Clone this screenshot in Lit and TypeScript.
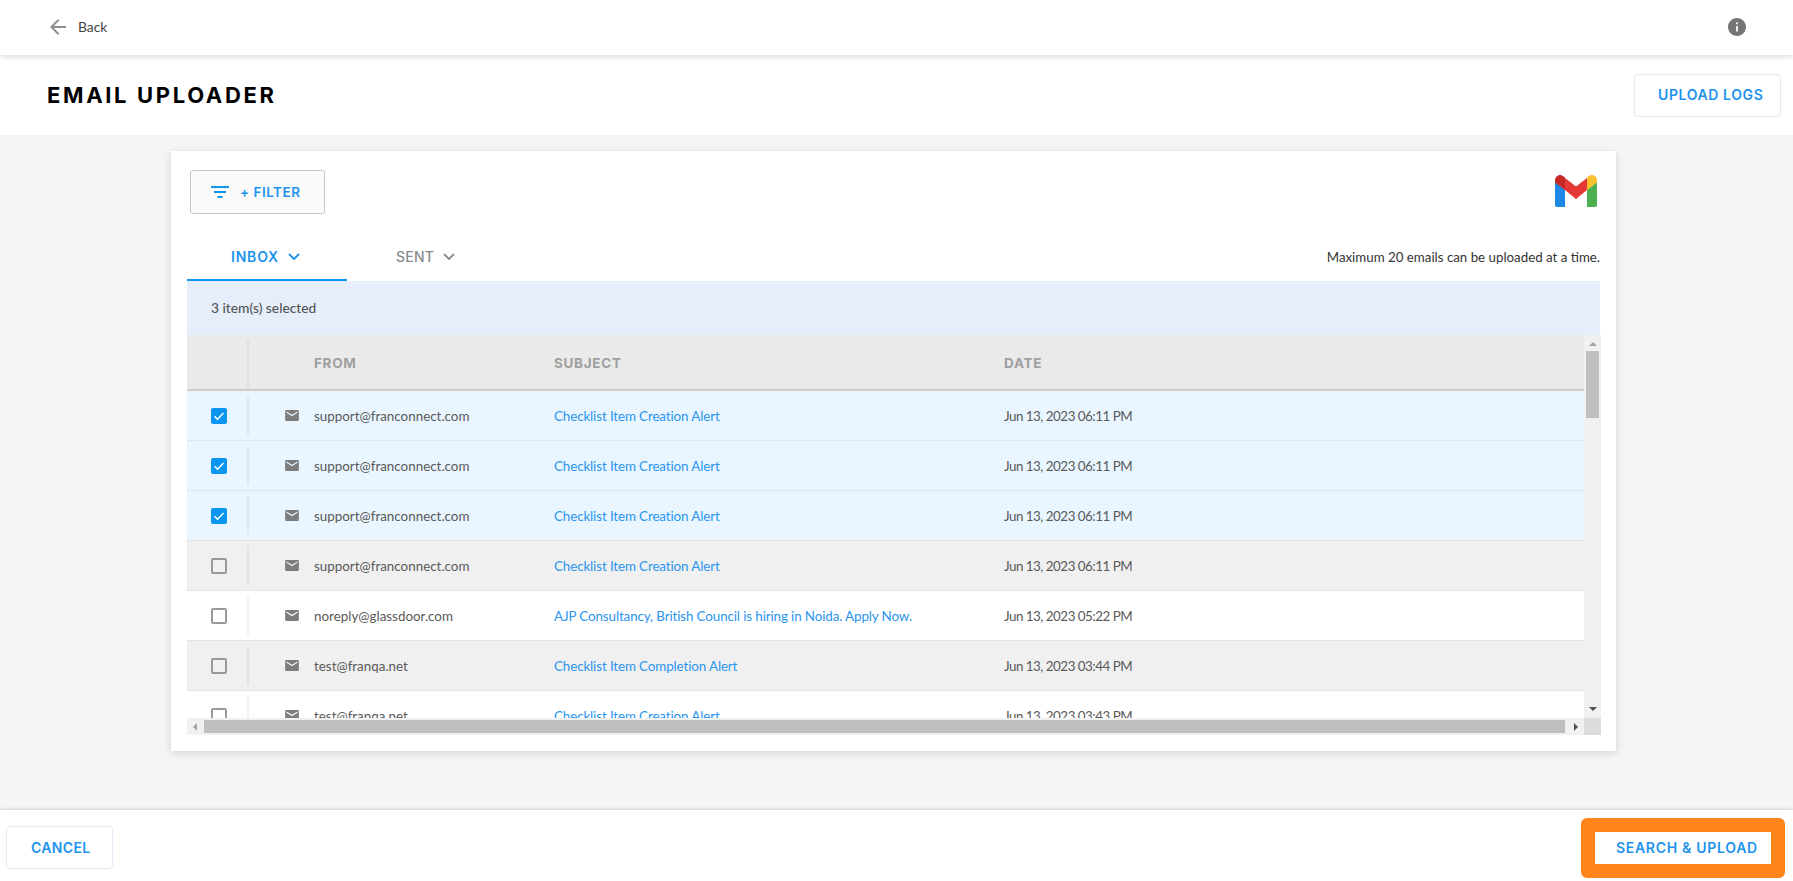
import { LitElement, html, css } from "lit";
import { customElement } from "lit/decorators.js";
import { classMap } from "lit/directives/class-map.js";

const ROWS = [
  { from: "support@franconnect.com", subject: "Checklist Item Creation Alert", date: "Jun 13, 2023 06:11 PM", tone: "sel", checked: true },
  { from: "support@franconnect.com", subject: "Checklist Item Creation Alert", date: "Jun 13, 2023 06:11 PM", tone: "sel", checked: true },
  { from: "support@franconnect.com", subject: "Checklist Item Creation Alert", date: "Jun 13, 2023 06:11 PM", tone: "sel", checked: true },
  { from: "support@franconnect.com", subject: "Checklist Item Creation Alert", date: "Jun 13, 2023 06:11 PM", tone: "alt", checked: false },
  { from: "noreply@glassdoor.com", subject: "AJP Consultancy, British Council is hiring in Noida. Apply Now.", date: "Jun 13, 2023 05:22 PM", tone: "", checked: false },
  { from: "test@franqa.net", subject: "Checklist Item Completion Alert", date: "Jun 13, 2023 03:44 PM", tone: "alt", checked: false },
  { from: "test@franqa.net", subject: "Checklist Item Creation Alert", date: "Jun 13, 2023 03:43 PM", tone: "", checked: false },
];

const mailIcon = html`<svg class="mail" viewBox="2 4 20 16" width="14" height="11"><path fill="#7d7d7d" d="M20 4H4c-1.1 0-2 .9-2 2v12c0 1.100.9 2 2 2h16c1.100 0 2-.9 2-2V6c0-1.100-.9-2-2-2zm0 4l-8 5-8-5V6l8 5 8-5v2z"/></svg>`;
const chevron = html`<svg class="chev" viewBox="0 0 12 7" width="12" height="7"><path d="M1 1l5 5 5-5" fill="none" stroke="currentColor" stroke-width="1.900"/></svg>`;

@customElement("app-root")
export class AppRoot extends LitElement {
  static styles = css`
    :host { display: flex; flex-direction: column; height: 100vh; font-family: "Lato", "Noto Sans", sans-serif; font-size: 13.400px; color: #333; background: #fff; overflow: hidden; }
    * { box-sizing: border-box; }
    .mont { font-family: "Inter", "Liberation Sans", sans-serif; }
    .top { flex: 0 0 55px; display: flex; align-items: center; padding: 0 47px 2px 50px; background: #fff; box-shadow: 0 2px 6px rgba(0,0,0,.14); position: relative; z-index: 2; }
    .back { display: flex; align-items: center; gap: 12px; color: #444; font-size: 13.800px; }
    .info { margin-left: auto; display: block; margin-top: 1px; }
    .titlebar { flex: 0 0 80px; display: flex; align-items: center; justify-content: space-between; padding: 0 12px 0 47px; background: #fff; }
    h1 { margin: 0; font-size: 22px; font-weight: 700; letter-spacing: 2.650px; color: #000; }
    .btn { display: flex; align-items: center; background: #fff; border: 1px solid #e3ebf8; border-radius: 4px; color: #1e93ee; font-size: 14px; font-weight: 600; height: 43px; letter-spacing: .6px; }
    .upload { width: 147px; padding-left: 23px; padding-bottom: 2px; }
    .main { flex: 1; min-height: 0; background: #f5f5f5; padding: 16px 177px 0 171px; }
    .card { height: 600px; background: #fff; box-shadow: 0 2px 8px rgba(0,0,0,.14); padding: 19px 15px 16px 16px; display: flex; flex-direction: column; }
    .filterrow { display: flex; justify-content: space-between; align-items: flex-start; padding: 0 4px 0 3px; height: 44px; }
    .filter { width: 135px; height: 44px; display: flex; align-items: center; gap: 11px; padding-left: 20px; background: #fafafa; border: 1px solid #c8c8c8; border-radius: 3px; color: #1e93ee; font-size: 13.500px; font-weight: 600; letter-spacing: .5px; }
    .gmail { display: block; margin-top: 5px; }
    .tabs { margin-top: 19px; height: 48px; display: flex; align-items: stretch; padding-right: 1px; }
    .tab { display: flex; align-items: center; gap: 9px; font-size: 14px; font-weight: 500; color: #8a8a8a; padding-left: 49px; padding-bottom: 2px; letter-spacing: .2px; }
    .tab.on { width: 160px; padding-left: 44px; padding-bottom: 0; color: #1e93ee; font-weight: 600; border-bottom: 2px solid #0e96f0; letter-spacing: .8px; }
    .limit { margin-left: auto; align-self: center; color: #333; font-family: "Lato", sans-serif; font-size: 13.300px; letter-spacing: 0; margin-top: -1px; }
    .selbar { height: 54px; margin-right: 1px; background: #e6eefb; display: flex; align-items: center; padding: 0 0 2px 24px; color: #555; font-size: 13.800px; font-weight: 500; }
    .tablewrap { flex: 1; min-height: 0; display: grid; grid-template-columns: 1fr 17px; grid-template-rows: 1fr 17px; }
    .viewport { min-height: 0; overflow: hidden; display: flex; flex-direction: column; }
    .head, .row { display: grid; grid-template-columns: 62px 65px 240px 450px 1fr; align-items: center; }
    .head { flex: 0 0 56px; background: #eaeaea; border-bottom: 2px solid #cccccc; color: #a0a0a0; font-size: 13.500px; font-weight: 700; letter-spacing: .7px; padding-top: 2px; }
    .row { flex: 0 0 50px; border-bottom: 1.500px solid #e4e4e4; color: #5a5a5a; }
    .row.sel { background: #e9f5ff; }
    .row.alt { background: #f0f0f0; }
    .cb { align-self: stretch; margin: 5px 0; padding-left: 24px; display: flex; align-items: center; border-right: 2px solid rgba(0,0,0,.05); }
    .head .cb { margin: 3px 0 0; }
    .box { width: 16px; height: 16px; border: 2px solid #9a9a9a; border-radius: 2px; display: block; }
    .box.on { border: 0; background: #0a96f0; }
    .iconcell { padding-left: 36px; display: flex; align-items: center; }
    .mail { display: block; margin-top: -1px; }
    .link { color: #2b95ee; letter-spacing: -.12px; }
    .date { letter-spacing: -.5px; }
    .vbar { background: #f1f1f1; display: flex; flex-direction: column; align-items: center; }
    .vbar .thumb { width: 13px; height: 67px; background: #bfbfbf; margin-top: 5px; }
    .vbar .spacer { flex: 1; }
    .arrow { display: block; flex: none; }
    .up { margin-top: 7px; }
    .down { margin-bottom: 7px; }
    .hbar { background: #f1f1f1; display: flex; align-items: center; padding: 0 6px; }
    .hbar .thumb { flex: 1; height: 13px; background: #bfbfbf; margin: 0 9px 0 7px; }
    .corner { background: #dcdcdc; }
    .foot { flex: 0 0 71px; background: #fff; display: flex; align-items: center; justify-content: space-between; padding: 4px 8px 0 6px; box-shadow: 0 -1px 3px rgba(0,0,0,.14); position: relative; }
    .cancel { width: 107px; padding-left: 24px; letter-spacing: .35px; }
    .orange { border: 14px solid #ff8419; border-radius: 6px; width: 204px; height: 60px; display: flex; }
    .search { flex: 1; height: auto; border: 0; border-radius: 0; padding-left: 21px; letter-spacing: .7px; white-space: nowrap; }
  `;

  private renderRow(r: (typeof ROWS)[number]) {
    return html`<div class=${classMap({ row: true, sel: r.tone === "sel", alt: r.tone === "alt" })}>
      <div class="cb">
        ${r.checked
          ? html`<svg class="box on" viewBox="0 0 16 16"><path d="M3.500 8.300l3 3 6-6.300" fill="none" stroke="#fff" stroke-width="1.500"/></svg>`
          : html`<span class="box"></span>`}
      </div>
      <div class="iconcell">${mailIcon}</div>
      <div>${r.from}</div>
      <div class="link">${r.subject}</div>
      <div class="date">${r.date}</div>
    </div>`;
  }

  render() {
    return html`
      <div class="top">
        <div class="back">
          <svg viewBox="4 4 16 16" width="16" height="16"><path fill="#8f8f8f" d="M20 11H7.830l5.590-5.590L12 4l-8 8 8 8 1.410-1.410L7.830 13H20v-2z"/></svg>
          <span>Back</span>
        </div>
        <svg class="info" viewBox="2 2 20 20" width="18" height="18"><path fill="#757575" d="M12 2C6.480 2 2 6.480 2 12s4.480 10 10 10 10-4.480 10-10S17.520 2 12 2zm1 15h-2v-6h2v6zm0-8h-2V7h2v2z"/></svg>
      </div>
      <div class="titlebar">
        <h1 class="mont">EMAIL UPLOADER</h1>
        <div class="btn upload mont">UPLOAD LOGS</div>
      </div>
      <div class="main">
        <div class="card">
          <div class="filterrow">
            <div class="filter mont">
              <svg viewBox="0 0 18 12" width="18" height="12"><path fill="#0e96f0" d="M0 0h18v2H0zM3 5h12v2H3zM6.500 10h5v2h-5z"/></svg>
              <span>+ FILTER</span>
            </div>
            <svg class="gmail" viewBox="0 0 42 32" width="42" height="32">
              <path fill="#1e88e5" d="M0 7l10 8v17H2a2 2 0 0 1-2-2z"/>
              <path fill="#4caf50" d="M42 7l-10 8v17h8a2 2 0 0 0 2-2z"/>
              <path fill="#e53935" d="M10 3l11 8.500L32 3v12l-11 9-11-9z"/>
              <path fill="#c62828" d="M0 5.500C0 1 5-1.500 8 1l2 1.500V15L0 7.500z"/>
              <path fill="#fbc02d" d="M42 5.500C42 1 37-1.500 34 1l-2 1.500V15l10-7.500z"/>
            </svg>
          </div>
          <div class="tabs mont">
            <div class="tab on"><span>INBOX</span>${chevron}</div>
            <div class="tab"><span>SENT</span>${chevron}</div>
            <div class="limit">Maximum 20 emails can be uploaded at a time.</div>
          </div>
          <div class="selbar">3 item(s) selected</div>
          <div class="tablewrap">
            <div class="viewport">
              <div class="head mont">
                <div class="cb"></div><div></div><div>FROM</div><div>SUBJECT</div><div>DATE</div>
              </div>
              ${ROWS.map((r) => this.renderRow(r))}
            </div>
            <div class="vbar">
              <svg class="arrow up" viewBox="0 0 8 4" width="8" height="4"><path fill="#a3a3a3" d="M4 0l4 4H0z"/></svg>
              <div class="thumb"></div>
              <div class="spacer"></div>
              <svg class="arrow down" viewBox="0 0 8 4" width="8" height="4"><path fill="#505050" d="M0 0h8L4 4z"/></svg>
            </div>
            <div class="hbar">
              <svg class="arrow" viewBox="0 0 4 8" width="4" height="8"><path fill="#a3a3a3" d="M4 0v8L0 4z"/></svg>
              <div class="thumb"></div>
              <svg class="arrow" viewBox="0 0 4 8" width="4" height="8"><path fill="#505050" d="M0 0v8l4-4z"/></svg>
            </div>
            <div class="corner"></div>
          </div>
        </div>
      </div>
      <div class="foot">
        <div class="btn cancel mont">CANCEL</div>
        <div class="orange"><div class="btn search mont">SEARCH &amp; UPLOAD</div></div>
      </div>
    `;
  }
}
